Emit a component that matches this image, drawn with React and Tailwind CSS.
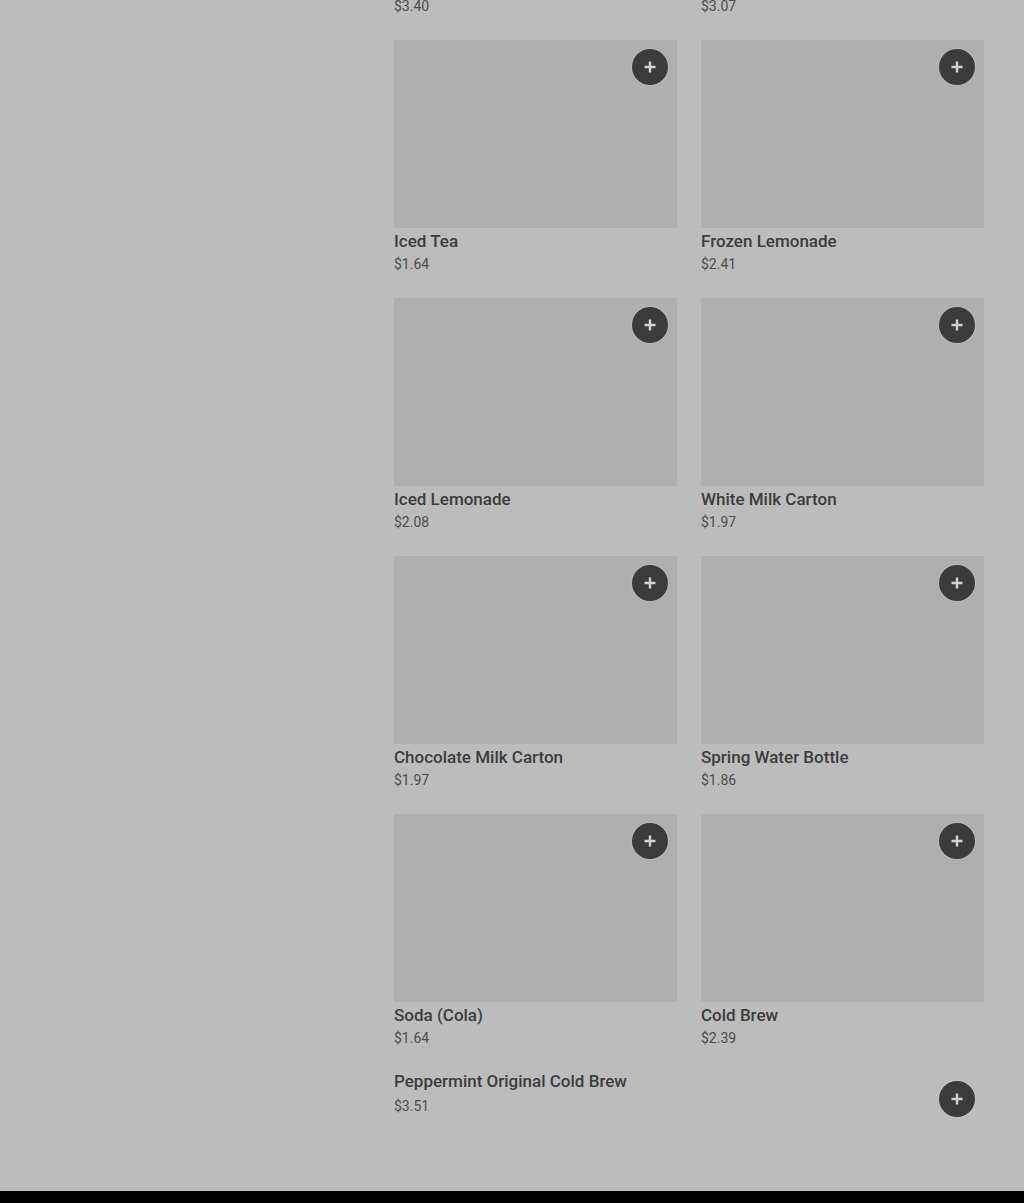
import React from "react";

const items = [
  { name: "Hidden", price: "$3.40" },
  { name: "Hidden", price: "$3.07" },
  { name: "Iced Tea", price: "$1.64" },
  { name: "Frozen Lemonade", price: "$2.41" },
  { name: "Iced Lemonade", price: "$2.08" },
  { name: "White Milk Carton", price: "$1.97" },
  { name: "Chocolate Milk Carton", price: "$1.97" },
  { name: "Spring Water Bottle", price: "$1.86" },
  { name: "Soda (Cola)", price: "$1.64" },
  { name: "Cold Brew", price: "$2.39" },
];

function AddButton() {
  return (
    <button className="absolute top-[9px] right-[9px] w-9 h-9 rounded-full bg-[#3b3b3b] flex items-center justify-center shadow-[0_0_0_1px_rgba(220,220,220,0.25)]">
      <svg width="14" height="14" viewBox="0 0 14 14">
        <path d="M7 1.5v11M1.5 7h11" stroke="#d2d2d2" strokeWidth="2.4" />
      </svg>
    </button>
  );
}

function Card({ item }) {
  return (
    <div className="flex flex-col">
      <div className="relative h-[188px] bg-[#afafaf]">
        <AddButton />
      </div>
      <div className="mt-px text-[17px] leading-6 font-medium text-[#3c3c3c]">
        {item.name}
      </div>
      <div className="mt-px text-[14px] leading-5 text-[#4d4d4d]">{item.price}</div>
    </div>
  );
}

export default function App() {
  return (
    <div
      className="h-[1203px] overflow-hidden bg-[#bcbcbc]"
      style={{ fontFamily: "Roboto, 'Liberation Sans', sans-serif" }}
    >
      <div className="flex">
        <aside className="w-[394px] shrink-0" />
        <main className="flex-1 pr-10 mt-[-218px]">
          <div className="grid grid-cols-2 gap-x-6 gap-y-6">
            {items.map((item, i) => (
              <Card key={i} item={item} />
            ))}
            <div className="col-span-2 relative h-11">
              <div className="-mt-[3px] text-[17px] leading-6 font-medium text-[#3c3c3c]">
                Peppermint Original Cold Brew
              </div>
              <div className="mt-[3px] text-[14px] leading-5 text-[#4d4d4d]">$3.51</div>
              <AddButton />
            </div>
          </div>
        </main>
      </div>
      <footer className="mt-[75px] h-[200px] bg-black" />
    </div>
  );
}
